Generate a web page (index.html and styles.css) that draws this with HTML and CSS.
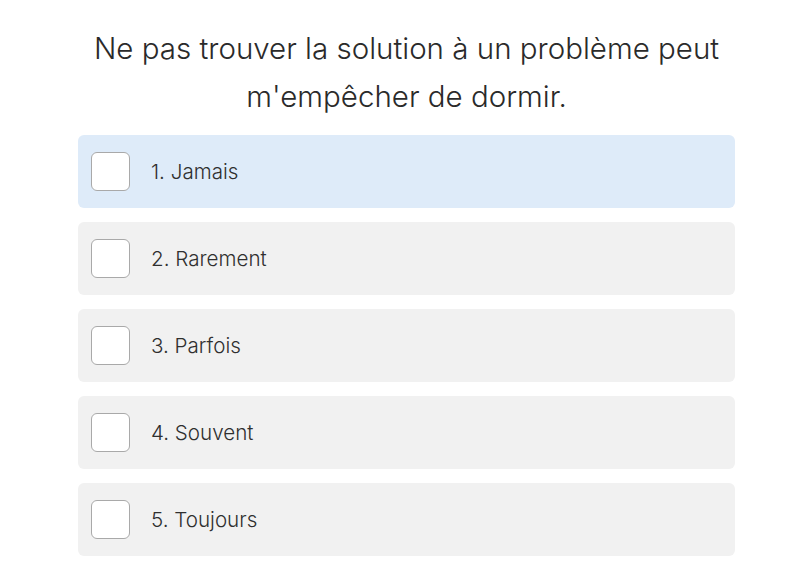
FILE: index.html
```html
<!DOCTYPE html>
<html lang="fr">
<head>
<meta charset="utf-8">
<link rel="stylesheet" href="styles.css">
</head>
<body>
<main class="question">
  <h1 class="title">Ne pas trouver la solution à un problème peut m'empêcher de dormir.</h1>
  <ul class="options">
    <li class="option option-active"><span class="box"></span><span class="label">1. Jamais</span></li>
    <li class="option"><span class="box"></span><span class="label">2. Rarement</span></li>
    <li class="option"><span class="box"></span><span class="label">3. Parfois</span></li>
    <li class="option"><span class="box"></span><span class="label">4. Souvent</span></li>
    <li class="option"><span class="box"></span><span class="label">5. Toujours</span></li>
  </ul>
</main>
</body>
</html>
```
FILE: styles.css
```css
html, body {
  margin: 0;
  padding: 0;
  background: #ffffff;
}
body {
  font-family: "Inter", "Open Sans", sans-serif;
  color: #2f2f2f;
}
.question {
  width: 657px;
  margin-left: 78px;
  padding-top: 24px;
}
.title {
  margin: 0 0 15px;
  font-size: 29.5px;
  font-weight: 300;
  line-height: 48px;
  text-align: center;
  color: #2a2a2a;
}
.options {
  list-style: none;
  margin: 0;
  padding: 0;
  display: flex;
  flex-direction: column;
  gap: 14px;
}
.option {
  height: 73px;
  box-sizing: border-box;
  background: #f1f1f1;
  border-radius: 6px;
  display: flex;
  align-items: center;
  padding-left: 13px;
}
.option-active {
  background: #deebf9;
}
.box {
  width: 39px;
  height: 39px;
  box-sizing: border-box;
  border: 1.5px solid #a9a9a9;
  border-radius: 6px;
  background: #ffffff;
  flex: none;
}
.label {
  margin-left: 21px;
  font-size: 20.6px;
  font-weight: 300;
  color: #2f2f2f;
}
```
